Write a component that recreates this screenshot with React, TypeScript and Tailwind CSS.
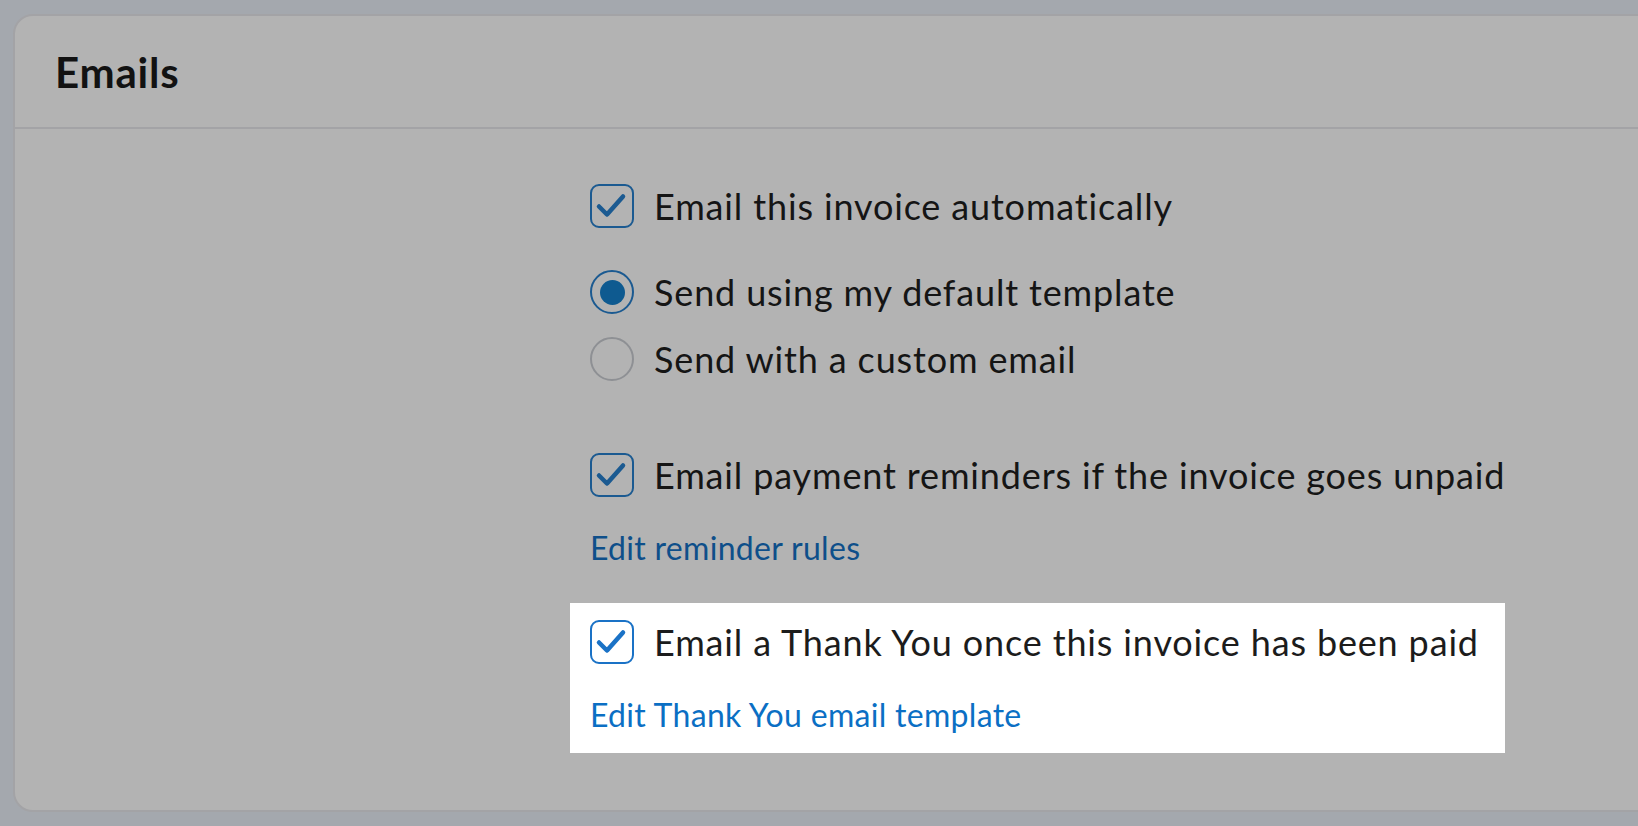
import React from 'react';

const font = { fontFamily: 'Lato, "Noto Sans", sans-serif' };

function CheckBox({ tone }: { tone: 'dim' | 'lit' }) {
    const color = tone === 'dim' ? '#1b5a91' : '#1a72c6';
    return (
        <div
            className={`flex h-[44px] w-[44px] shrink-0 items-center justify-center rounded-[9px] border-2 ${
                tone === 'dim' ? 'border-[#1b5a91]' : 'border-[#1a72c6]'
            }`}
        >
            <svg width="44" height="44" viewBox="0 0 44 44" fill="none" className="-m-[2px]">
                <path
                    d="M9 22.5 L17 30.5 L33 12.5"
                    stroke={color}
                    strokeWidth="4.5"
                    strokeLinecap="round"
                    strokeLinejoin="round"
                />
            </svg>
        </div>
    );
}

function Radio({ checked }: { checked?: boolean }) {
    if (checked) {
        return (
            <div className="flex h-[44px] w-[44px] shrink-0 items-center justify-center rounded-full border-2 border-[#1b5a91]">
                <div className="h-[25px] w-[25px] rounded-full bg-[#0e5a90]" />
            </div>
        );
    }
    return <div className="h-[44px] w-[44px] shrink-0 rounded-full border-2 border-[#8e9094]" />;
}

export default function App() {
    return (
        <div className="h-[826px] w-full overflow-hidden bg-[#a4a8ae] pl-[13px] pt-[14px]" style={font}>
            <div className="flex h-[798px] w-[1700px] flex-col rounded-[20px] border-2 border-[#a3a3a6] bg-[#b3b3b3]">
                {/* header */}
                <div className="flex h-[113px] items-center border-b-2 border-[#a3a3a6] pl-[40px]">
                    <h1 className="text-[42px] font-bold leading-none tracking-[0.8px] text-[#121212]">Emails</h1>
                </div>

                {/* body */}
                <div className="flex flex-col pl-[555px] pt-[55px]">
                    <div className="flex h-[44px] items-center gap-[20px] px-[20px]">
                        <CheckBox tone="dim" />
                        <span className="text-[36px] leading-none tracking-[0.85px] text-[#151515]">
                            Email this invoice automatically
                        </span>
                    </div>

                    <div className="mt-[42px] flex flex-col gap-[23px] px-[20px]">
                        <div className="flex h-[44px] items-center gap-[20px]">
                            <Radio checked />
                            <span className="text-[36px] leading-none tracking-[0.85px] text-[#151515]">
                                Send using my default template
                            </span>
                        </div>
                        <div className="flex h-[44px] items-center gap-[20px]">
                            <Radio />
                            <span className="text-[36px] leading-none tracking-[0.85px] text-[#151515]">
                                Send with a custom email
                            </span>
                        </div>
                    </div>

                    <div className="mt-[72px] flex h-[44px] items-center gap-[20px] px-[20px]">
                        <CheckBox tone="dim" />
                        <span className="text-[36px] leading-none tracking-[0.85px] text-[#151515]">
                            Email payment reminders if the invoice goes unpaid
                        </span>
                    </div>
                    <div className="mt-[31px] px-[20px]">
                        <a className="block text-[32px] leading-[40px] tracking-[0.3px] text-[#0e4f8a]">
                            Edit reminder rules
                        </a>
                    </div>

                    <div className="mt-[35px] w-[935px] bg-white px-[20px] pb-[18px] pt-[17px]">
                        <div className="flex h-[44px] items-center gap-[20px]">
                            <CheckBox tone="lit" />
                            <span className="text-[36px] leading-none tracking-[0.85px] text-[#1c1c1c]">
                                Email a Thank You once this invoice has been paid
                            </span>
                        </div>
                        <a className="mt-[31px] block text-[32px] leading-[40px] tracking-[0.3px] text-[#0b6fc4]">
                            Edit Thank You email template
                        </a>
                    </div>
                </div>
            </div>
        </div>
    );
}
